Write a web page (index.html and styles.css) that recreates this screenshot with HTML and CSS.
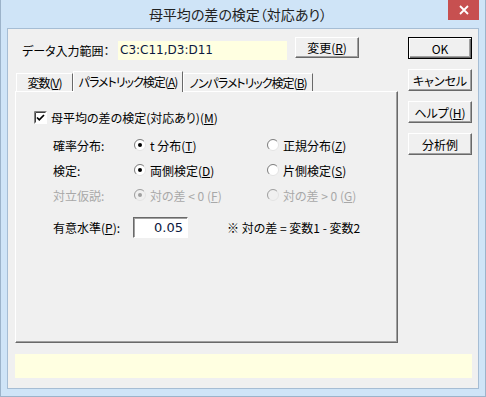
FILE: index.html
```html
<!DOCTYPE html>
<html lang="ja">
<head>
  <meta charset="UTF-8" />
  <title>母平均の差の検定（対応あり）</title>
  <link rel="stylesheet" href="styles.css">
</head>
<body>
  <div class="window">
    <div class="titlebar">
      <div class="title">母平均の差の検定（対応あり）</div>
      <div class="close">
        <svg width="10" height="10" viewBox="0 0 10 10"><path d="M1 1 L9 9 M9 1 L1 9" stroke="#fff" stroke-width="1.8"/></svg>
      </div>
    </div>

    <div class="client">
      <div class="top">
        <div class="main">
          <div class="range">
            <span class="range-label">データ入力範囲：</span>
            <span class="range-field">C3:C11,D3:D11</span>
            <button class="btn change">変更(<u>R</u>)</button>
          </div>

          <div class="tabs">
            <div class="tab tab-vars"><span>変数(<u>V</u>)</span></div>
            <div class="tab tab-param active"><span>パラメトリック検定(<u>A</u>)</span></div>
            <div class="tab tab-nonparam"><span>ノンパラメトリック検定(<u>B</u>)</span></div>
          </div>

          <div class="panel">
            <div class="check">
              <svg class="checkbox" width="13" height="13" viewBox="0 0 13 13">
                <rect x="0.5" y="0.5" width="12" height="12" fill="#fff" stroke="#fff"/>
                <path d="M0.5 12.5 V0.5 H12.5" fill="none" stroke="#808080"/>
                <path d="M1.5 11.5 V1.5 H11.5" fill="none" stroke="#404040"/>
                <path d="M3 6.5 L5.3 8.8 L10 4" fill="none" stroke="#000" stroke-width="1.7"/>
              </svg>
              <span>母平均の差の検定(対応あり)(<u>M</u>)</span>
            </div>

            <div class="options">
              <span>確率分布:</span>
              <span class="radio">
                <svg width="12" height="12" viewBox="0 0 12 12"><circle cx="6" cy="6" r="5.5" fill="#fff" stroke="#e3e3e3"/><path d="M2.1 9.9 A5.5 5.5 0 0 1 9.9 2.1" fill="none" stroke="#808080"/><circle cx="6" cy="6" r="2" fill="#000"/></svg>
                <span>t 分布(<u>T</u>)</span>
              </span>
              <span class="radio">
                <svg width="12" height="12" viewBox="0 0 12 12"><circle cx="6" cy="6" r="5.5" fill="#fff" stroke="#e3e3e3"/><path d="M2.1 9.9 A5.5 5.5 0 0 1 9.9 2.1" fill="none" stroke="#808080"/></svg>
                <span>正規分布(<u>Z</u>)</span>
              </span>

              <span>検定:</span>
              <span class="radio">
                <svg width="12" height="12" viewBox="0 0 12 12"><circle cx="6" cy="6" r="5.5" fill="#fff" stroke="#e3e3e3"/><path d="M2.1 9.9 A5.5 5.5 0 0 1 9.9 2.1" fill="none" stroke="#808080"/><circle cx="6" cy="6" r="2" fill="#000"/></svg>
                <span>両側検定(<u>D</u>)</span>
              </span>
              <span class="radio">
                <svg width="12" height="12" viewBox="0 0 12 12"><circle cx="6" cy="6" r="5.5" fill="#fff" stroke="#e3e3e3"/><path d="M2.1 9.9 A5.5 5.5 0 0 1 9.9 2.1" fill="none" stroke="#808080"/></svg>
                <span>片側検定(<u>S</u>)</span>
              </span>

              <span class="disabled">対立仮説:</span>
              <span class="radio disabled">
                <svg width="12" height="12" viewBox="0 0 12 12"><circle cx="6" cy="6" r="5.5" fill="#f0f0f0" stroke="#e3e3e3"/><path d="M2.1 9.9 A5.5 5.5 0 0 1 9.9 2.1" fill="none" stroke="#a0a0a0"/><circle cx="6" cy="6" r="2" fill="#a0a0a0"/></svg>
                <span>対の差 &lt; 0 (<u>F</u>)</span>
              </span>
              <span class="radio disabled">
                <svg width="12" height="12" viewBox="0 0 12 12"><circle cx="6" cy="6" r="5.5" fill="#f0f0f0" stroke="#e3e3e3"/><path d="M2.1 9.9 A5.5 5.5 0 0 1 9.9 2.1" fill="none" stroke="#a0a0a0"/></svg>
                <span>対の差 &gt; 0 (<u>G</u>)</span>
              </span>
            </div>

            <div class="level">
              <span class="level-label">有意水準(<u>P</u>):</span>
              <span class="level-input">0.05</span>
              <span class="note">※ 対の差 = 変数1 - 変数2</span>
            </div>
          </div>
        </div>

        <div class="side">
          <button class="btn default">OK</button>
          <button class="btn">キャンセル</button>
          <button class="btn">ヘルプ(<u>H</u>)</button>
          <button class="btn">分析例</button>
        </div>
      </div>

      <div class="status"></div>
    </div>
  </div>
</body>
</html>
```

FILE: styles.css
```css
* {
  box-sizing: border-box;
}

body {
  margin: 0;
  font-family: "Noto Sans CJK JP", sans-serif;
  font-size: 12px;
  font-feature-settings: "palt";
  color: #000;
}

u {
  text-underline-offset: 1px;
}

.window {
  width: 486px;
  height: 397px;
  background-color: #cfe4f7;
  border: 1px solid #9cb3ca;
  border-top: 0;
  display: flex;
  flex-direction: column;
}

.titlebar {
  height: 28px;
  display: grid;
  grid-template-columns: 1fr auto 1fr;
}

.title {
  grid-column: 2;
  margin-right: 10px;
  font-size: 14px;
  line-height: 28px;
  color: #222;
}

.close {
  grid-column: 3;
  justify-self: end;
  width: 31px;
  height: 20px;
  margin-right: 6px;
  background-color: #c75050;
  display: flex;
  align-items: center;
  justify-content: center;
}

.client {
  flex: 1;
  margin: 0 6px 7px 6px;
  background-color: #f0f0f0;
  border: 1px solid #a6bdd4;
  padding: 8px 6px 10px 7px;
  display: flex;
  flex-direction: column;
}

.top {
  display: flex;
}

.main {
  width: 383px;
}

.range {
  display: flex;
  align-items: flex-end;
  height: 23px;
  padding-left: 7px;
}

.range-label {
  width: 96px;
  line-height: 19px;
}

.range-field {
  width: 169px;
  height: 19px;
  line-height: 19px;
  padding-left: 2px;
  background-color: #ffffe1;
  color: #0c1840;
  font-family: "DejaVu Sans", sans-serif;
  font-size: 12px;
}

.btn {
  width: 64px;
  height: 22px;
  padding: 0;
  font: inherit;
  font-weight: normal;
  color: #000;
  background-color: #f0f0f0;
  border: 1px solid;
  border-color: #fff #696969 #696969 #fff;
  box-shadow: inset -1px -1px 0 #a0a0a0;
}

.btn.change {
  align-self: flex-start;
  height: 21px;
  margin-left: 8px;
}

.btn.default {
  border-color: #000;
  box-shadow: inset 1px 1px 0 #fff, inset -1px -1px 0 #696969, inset -2px -2px 0 #a0a0a0;
}

.tabs {
  display: flex;
  align-items: flex-end;
  height: 20px;
  margin-top: 11px;
  padding-left: 1px;
  position: relative;
  z-index: 1;
}

.tab {
  height: 18px;
  display: flex;
  align-items: center;
  justify-content: center;
  border: 1px solid;
  border-bottom: 0;
  border-color: #fff #696969 transparent #fff;
  white-space: nowrap;
  letter-spacing: -1px;
}

.tab-vars {
  width: 57px;
}

.tab-param {
  width: 110px;
}

.tab-nonparam {
  width: 130px;
}

.tab.active {
  height: 21px;
  margin-bottom: -1px;
  padding-bottom: 2px;
  background-color: #f0f0f0;
}

.panel {
  height: 252px;
  border: 1px solid;
  border-color: #fff #696969 #696969 #fff;
  box-shadow: inset -1px -1px 0 #a0a0a0;
  padding: 15px 0 0 18px;
}

.check {
  display: flex;
  align-items: center;
  gap: 4px;
  height: 20px;
}

.options {
  display: grid;
  grid-template-columns: 81px 133px auto;
  grid-auto-rows: 20px;
  row-gap: 5px;
  align-items: center;
  margin: 8px 0 0 19px;
}

.radio {
  display: flex;
  align-items: center;
  gap: 4px;
}

.disabled {
  color: #a8a8a8;
}

.level {
  display: flex;
  align-items: center;
  height: 21px;
  margin: 12px 0 0 19px;
}

.level-label {
  width: 80px;
}

.level-input {
  width: 55px;
  height: 21px;
  line-height: 19px;
  padding-right: 4px;
  text-align: right;
  background-color: #fff;
  border: 1px solid;
  border-color: #696969 #fff #fff #696969;
  box-shadow: inset 1px 1px 0 #a0a0a0;
  color: #0c1840;
  font-family: "DejaVu Sans", sans-serif;
  font-size: 13px;
}

.note {
  margin-left: 39px;
}

.side {
  margin-left: auto;
  width: 64px;
  display: flex;
  flex-direction: column;
  gap: 10px;
}

.status {
  height: 24px;
  margin-top: auto;
  background-color: #ffffe1;
}
```
